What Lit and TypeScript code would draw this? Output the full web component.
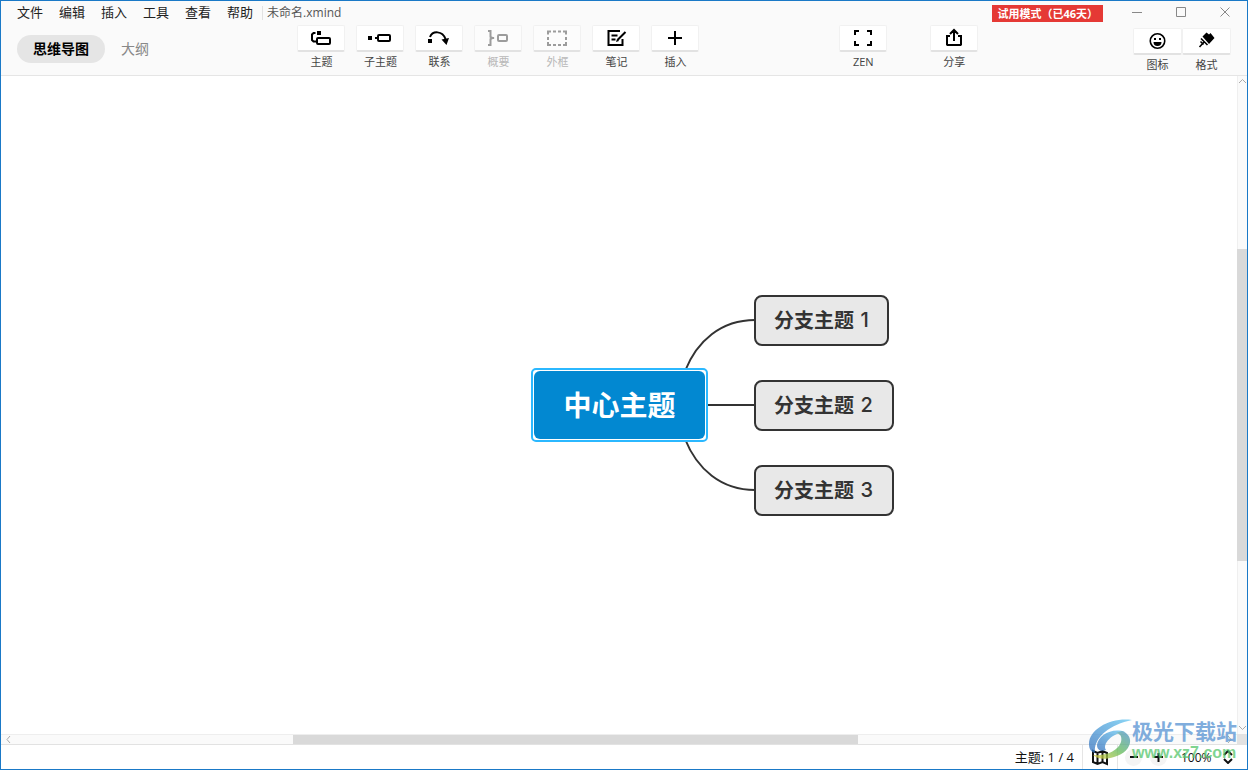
import { LitElement, html, css, svg } from "lit";
import { customElement, property, state } from "lit/decorators.js";
import { classMap } from "lit/directives/class-map.js";

const sans = css`"Open Sans", "Noto Sans CJK SC", sans-serif`;

const icons: Record<string, unknown> = {
  topic: svg`<path class="fill" d="M8 5h4v4h-4z"/><path d="M6.500 7H4.500L3 8.500v5.500L4.500 15.500H7"/><rect x="8" y="12" width="13" height="6" rx="1"/>`,
  subtopic: svg`<path class="fill" d="M0 10h4v4H0z"/><path d="M7 12h3"/><rect x="10" y="9" width="12" height="6" rx="1"/>`,
  relation: svg`<path class="fill" d="M1 13h4v4H1zM14.500 13.500l7.500-1.500-2.500 7z"/><path d="M3 11C5.500 4.500 15.500 4.500 18.500 13"/>`,
  summary: svg`<path d="M2 5h2.500v6L6.500 12l-2 1v6H2M6 12h2"/><rect x="12" y="9" width="9" height="6" rx="1"/>`,
  boundary: svg`<path d="M3 8.500V5.500h3M8 5.500h3M13 5.500h3M18 5.500h3v3M21 11v3M21 16v3h-3M16 19h-3M11 19H8M6 19H3v-3M3 14v-3"/>`,
  note: svg`<path d="M16 5H4.500V19H18.500V13"/><path d="M7.500 9.500h6M7.500 13.500h4M13.500 14l8-8" /><path class="fill" d="M12 16l1-3 2 2z"/>`,
  insert: svg`<path d="M12 5v14M5 12h14"/>`,
  zen: svg`<path d="M4 9V5h4M16 5h4v4M20 15v4h-4M8 19H4v-4"/>`,
  share: svg`<path d="M8 10H5v8.500l.500.500h13l.500-.500V10h-3M12 15V4M8 8l4-4 4 4"/>`,
  smile: svg`<circle class="thin" cx="11.500" cy="12" r="7.250"/><path class="fill" d="M8 9h2v2H8zM13 9h2v2h-2zM7.500 13h8a4 4 0 0 1-8 0z"/>`,
  brush: svg`<path class="fill" d="M7.500 7.500l4-4 2.500 2 1.500-1.500 4 5-5.500 6z"/><path class="thin" d="M6 9.500l6.500 6.500M9.500 12.500L4.500 18M5.500 12.500l3 3"/>`,
};

interface Tool {
  icon: string;
  label: string;
  disabled?: boolean;
}

@customElement("tool-button")
export class ToolButton extends LitElement {
  @property() icon = "";
  @property() label = "";
  @property({ type: Boolean }) disabled = false;

  static styles = css`
    :host { display: block; }
    .tool {
      display: flex; flex-direction: column; align-items: center; gap: 2px;
      width: 100%; padding: 0; border: 0; background: none;
      font: 11px/16px ${sans}; color: #444; white-space: nowrap;
    }
    .face {
      box-sizing: border-box; width: 100%; height: 27px;
      display: flex; justify-content: center;
      background: #fff; border: 1px solid #f1f1f1; border-bottom: 2px solid #e2e2e2;
      border-radius: 2px;
    }
    svg { width: 24px; height: 24px; overflow: visible; fill: none; stroke: #000; stroke-width: 2; }
    .thin { stroke-width: 1.6; }
    .fill { fill: #000; stroke: none; }
    .tool:disabled { color: #b8b8b8; }
    .tool:disabled .face { background: #fcfcfc; }
    .tool:disabled svg { stroke: #9c9c9c; }
  `;

  render() {
    return html`<button class="tool" ?disabled=${this.disabled}>
      <span class="face"><svg viewBox="0 0 24 24" aria-hidden="true">${icons[this.icon]}</svg></span>
      <span>${this.label}</span>
    </button>`;
  }
}

@customElement("mind-map")
export class MindMap extends LitElement {
  static styles = css`
    :host { display: block; position: relative; overflow: hidden; background: #fff; }
    .origin { position: absolute; left: 50%; top: 50%; }
    .links { position: absolute; left: 0; top: -100px; width: 140px; height: 200px; fill: none; stroke: #333; stroke-width: 2; }
    .node {
      position: absolute; box-sizing: border-box; display: flex; align-items: center;
      white-space: pre; font-family: "Noto Sans CJK SC", sans-serif; font-weight: 700;
    }
    .central {
      left: -88px; top: -37px; width: 177px; height: 74px; padding: 1px;
      border: 2px solid #2bb8ff; border-radius: 5px; background: #fff;
    }
    .core {
      flex: 1; align-self: stretch; display: flex; align-items: center; justify-content: center;
      padding-bottom: 2px; border-radius: 6px; background: #0288d1; color: #fff; font-size: 28px;
    }
    .branch {
      left: 135px; height: 51px; padding: 0 18px 2px; border: 2px solid #333; border-radius: 8px;
      background: #e8e8e8; color: #333; font-size: 20px;
    }
    .digit { margin-left: 2px; font-family: "Inter", sans-serif; font-weight: 500; }
    .b1 { top: -110px; width: 135px; }
    .b2 { top: -25px; width: 140px; }
    .b3 { top: 60px; width: 140px; }
  `;

  render() {
    return html`<div class="origin">
      <svg class="links" viewBox="0 0 140 200" aria-hidden="true">
        <path d="M66 66C78 36 102 15 136 15M84 100H136M66 134C78 164 102 185 136 185" />
      </svg>
      <div class="node central"><span class="core">中心主题</span></div>
      ${[1, 2, 3].map(
        (n) => html`<div class="node branch b${n}">分支主题 <span class="digit">${n}</span></div>`
      )}
    </div>`;
  }
}

@customElement("app-root")
export class AppRoot extends LitElement {
  @state() private view = "思维导图";

  private menus = ["文件", "编辑", "插入", "工具", "查看", "帮助"];
  private tools: Tool[] = [
    { icon: "topic", label: "主题" },
    { icon: "subtopic", label: "子主题" },
    { icon: "relation", label: "联系" },
    { icon: "summary", label: "概要", disabled: true },
    { icon: "boundary", label: "外框", disabled: true },
    { icon: "note", label: "笔记" },
    { icon: "insert", label: "插入" },
  ];

  static styles = css`
    :host {
      display: flex; flex-direction: column; box-sizing: border-box; height: 100vh;
      position: relative; border: 1px solid #1a79c7; background: #fff;
      font-family: ${sans}; color: #222; overflow: hidden;
    }
    button, select { font: inherit; color: inherit; border: 0; background: none; padding: 0; margin: 0; }
    svg { display: block; fill: none; stroke: currentColor; }
    .header { background: #fafafa; border-bottom: 1px solid #e5e5e5; }
    .titlebar { display: flex; align-items: center; height: 24px; padding: 0 14px 0 16px; }
    .menu { display: flex; gap: 16px; padding-bottom: 2px; font-size: 13px; line-height: 22px; }
    .filename { margin-left: 9px; padding-left: 4px; border-left: 1px solid #e2e2e2; font-size: 12px; line-height: 14px; color: #555; }
    .trial {
      margin-left: auto; padding: 0 5px; background: #e53935; color: #fff;
      font-size: 11px; line-height: 17px; font-weight: 700; white-space: nowrap;
    }
    .window { display: flex; gap: 28px; margin-left: 26px; padding-bottom: 2px; color: #888; }
    .window svg { width: 16px; height: 16px; }
    .toolbar {
      display: grid; align-items: start; height: 50px;
      grid-template-columns: minmax(0, 297fr) auto minmax(0, 140fr) auto minmax(0, 155fr) auto;
      padding-right: 16px;
    }
    .tabs { display: flex; align-items: center; padding: 10px 0 0 16px; }
    .tab { height: 28px; padding: 0 16px; border-radius: 14px; font-size: 14px; line-height: 28px; color: #888; white-space: nowrap; }
    .tab.active { background: #e5e5e5; color: #000; font-weight: 700; }
    .tools { display: flex; gap: 11px; grid-column: 2; }
    .tools tool-button, .extras tool-button { width: 48px; }
    .extras { display: flex; gap: 43px; grid-column: 4; }
    .panels { display: flex; grid-column: 6; padding-top: 3px; }
    .panels tool-button { width: 49px; }
    .workspace { flex: 1; min-height: 0; display: grid; grid-template: minmax(0, 1fr) 11px / minmax(0, 1fr) 10px; }
    .scroll { display: flex; background: #fafafa; position: relative; }
    .scroll.v { flex-direction: column; border-left: 1px solid #efefef; }
    .scroll.h { border-top: 1px solid #eee; border-bottom: 1px solid #e2e2e2; }
    .before { flex: 173; }
    .thumb { flex: 312; background: #d9d9d9; }
    .v .thumb { margin-left: -1px; }
    .after { flex: 173; }
    .h .before { flex: 292; }
    .h .thumb { flex: 565; }
    .h .after { flex: 379; }
    .arrow { position: absolute; width: 9px; height: 9px; color: #aaa; }
    .up { top: 1px; left: 0; }
    .down { bottom: 2px; left: 0; }
    .left { left: 3px; top: 0; }
    .right { right: 3px; top: 0; }
    .corner { background: #e2e2e2; }
    .status { display: flex; justify-content: flex-end; align-items: center; height: 24px; padding-right: 14px; font-size: 13px; color: #111; }
    .count { padding: 0 8px 2px 0; }
    .map { height: 24px; width: 36px; box-sizing: border-box; border: solid #e5e5e5; border-width: 0 1px; display: flex; align-items: center; justify-content: center; }
    .map svg { width: 18px; height: 18px; stroke-width: 2; }
    .zoom { display: flex; align-items: center; margin-left: 7px; }
    .round { width: 17px; height: 17px; margin-right: 8px; border-radius: 50%; background: #f4f4f4; }
    .round svg { width: 17px; height: 17px; stroke-width: 2; }
    .level { display: flex; align-items: center; gap: 11px; margin-left: 6px; font-size: 12px; }
    .level select { appearance: none; width: 31px; font-size: 12px; }
    .level svg { width: 10px; height: 14px; stroke-width: 2; }
    .watermark { position: absolute; right: 10px; bottom: 6px; display: flex; pointer-events: none; opacity: 0.75; }
    .watermark svg { width: 43px; height: 42px; stroke: none; }
    .site { color: #5692d2; font-size: 21px; line-height: 24px; font-weight: 700; display: flex; flex-direction: column; }
    .url { color: #55c66c; font: 700 16px/20px "Liberation Sans", sans-serif; }
  `;

  private tool(t: Tool) {
    return html`<tool-button icon=${t.icon} label=${t.label} ?disabled=${t.disabled}></tool-button>`;
  }

  private arrow(side: string, d: string) {
    return html`<svg class="arrow ${side}" viewBox="0 0 9 9" aria-hidden="true"><path d=${d} /></svg>`;
  }

  render() {
    return html`
      <header class="header">
        <div class="titlebar">
          <nav class="menu">${this.menus.map((m) => html`<button>${m}</button>`)}</nav>
          <span class="filename">未命名.xmind</span>
          <span class="trial">试用模式（已46天）</span>
          <div class="window">
            <button aria-label="最小化"><svg viewBox="0 0 16 16"><path d="M3 8.500h10" /></svg></button>
            <button aria-label="最大化"><svg viewBox="0 0 16 16"><path d="M3.500 3.500h9v9h-9z" /></svg></button>
            <button aria-label="关闭"><svg viewBox="0 0 16 16"><path d="M3.500 3.500l9 9M12.500 3.500l-9 9" /></svg></button>
          </div>
        </div>
        <div class="toolbar">
          <div class="tabs">
            ${["思维导图", "大纲"].map(
              (v) => html`<button class=${classMap({ tab: true, active: this.view === v })} @click=${() => (this.view = v)}>${v}</button>`
            )}
          </div>
          <div class="tools">${this.tools.map((t) => this.tool(t))}</div>
          <div class="extras">
            ${this.tool({ icon: "zen", label: "ZEN" })}${this.tool({ icon: "share", label: "分享" })}
          </div>
          <div class="panels">
            ${this.tool({ icon: "smile", label: "图标" })}${this.tool({ icon: "brush", label: "格式" })}
          </div>
        </div>
      </header>
      <main class="workspace">
        <mind-map></mind-map>
        <div class="scroll v">
          <span class="before"></span><span class="thumb"></span><span class="after"></span>
          ${this.arrow("up", "M1 6l3.500-3.500L8 6")}${this.arrow("down", "M1 3l3.500 3.500L8 3")}
        </div>
        <div class="scroll h">
          <span class="before"></span><span class="thumb"></span><span class="after"></span>
          ${this.arrow("left", "M6 1L3 4.500 6 8")}${this.arrow("right", "M3 1l3 3.500L3 8")}
        </div>
        <div class="corner"></div>
      </main>
      <footer class="status">
        <span class="count">主题: 1 / 4</span>
        <button class="map" aria-label="导航图">
          <svg viewBox="0 0 18 18"><path d="M2 3l4.500 2L11.500 3 16 5v11l-4.500-2-5 2L2 14zM6.500 5v11M11.500 3v11" /></svg>
        </button>
        <div class="zoom">
          <button class="round" aria-label="缩小"><svg viewBox="0 0 17 17"><path d="M5 8h8" /></svg></button>
          <button class="round" aria-label="放大"><svg viewBox="0 0 17 17"><path d="M4 8h9M8.500 4v9" /></svg></button>
          <label class="level">
            <select aria-label="缩放比例"><option>100%</option></select>
            <svg viewBox="0 0 10 14" aria-hidden="true"><path d="M1 5l4-4 4 4M1 9l4 4 4-4" /></svg>
          </label>
        </div>
      </footer>
      <div class="watermark">
        <svg viewBox="0 0 43 42" aria-hidden="true">
          <defs>
            <linearGradient id="sky" x1="0" y1="1" x2="1" y2="0"><stop stop-color="#326fbd" /><stop offset="1" stop-color="#64c8f2" /></linearGradient>
            <linearGradient id="leaf" x1="0" y1="1" x2="1" y2="0"><stop stop-color="#e6d03c" /><stop offset=".5" stop-color="#60b957" /><stop offset="1" stop-color="#4a90d0" /></linearGradient>
          </defs>
          <path fill="url(#sky)" d="M43 1C24-2 0 9 0 25c0 5 2 8 6 9C4 19 20 6 43 1z" />
          <path fill="url(#sky)" d="M36 13C24 8 9 16 8 26c0 5 4 7 9 5-4-6 6-17 19-18z" />
          <path fill="url(#leaf)" d="M33 12c14 5 9 22-8 26-9 3-17 2-21-2 13 1 25-4 28-13 1-5 0-8-5-9z" />
        </svg>
        <div class="site"><span>极光下载站</span><span class="url">www.xz7.com</span></div>
      </div>
    `;
  }
}
